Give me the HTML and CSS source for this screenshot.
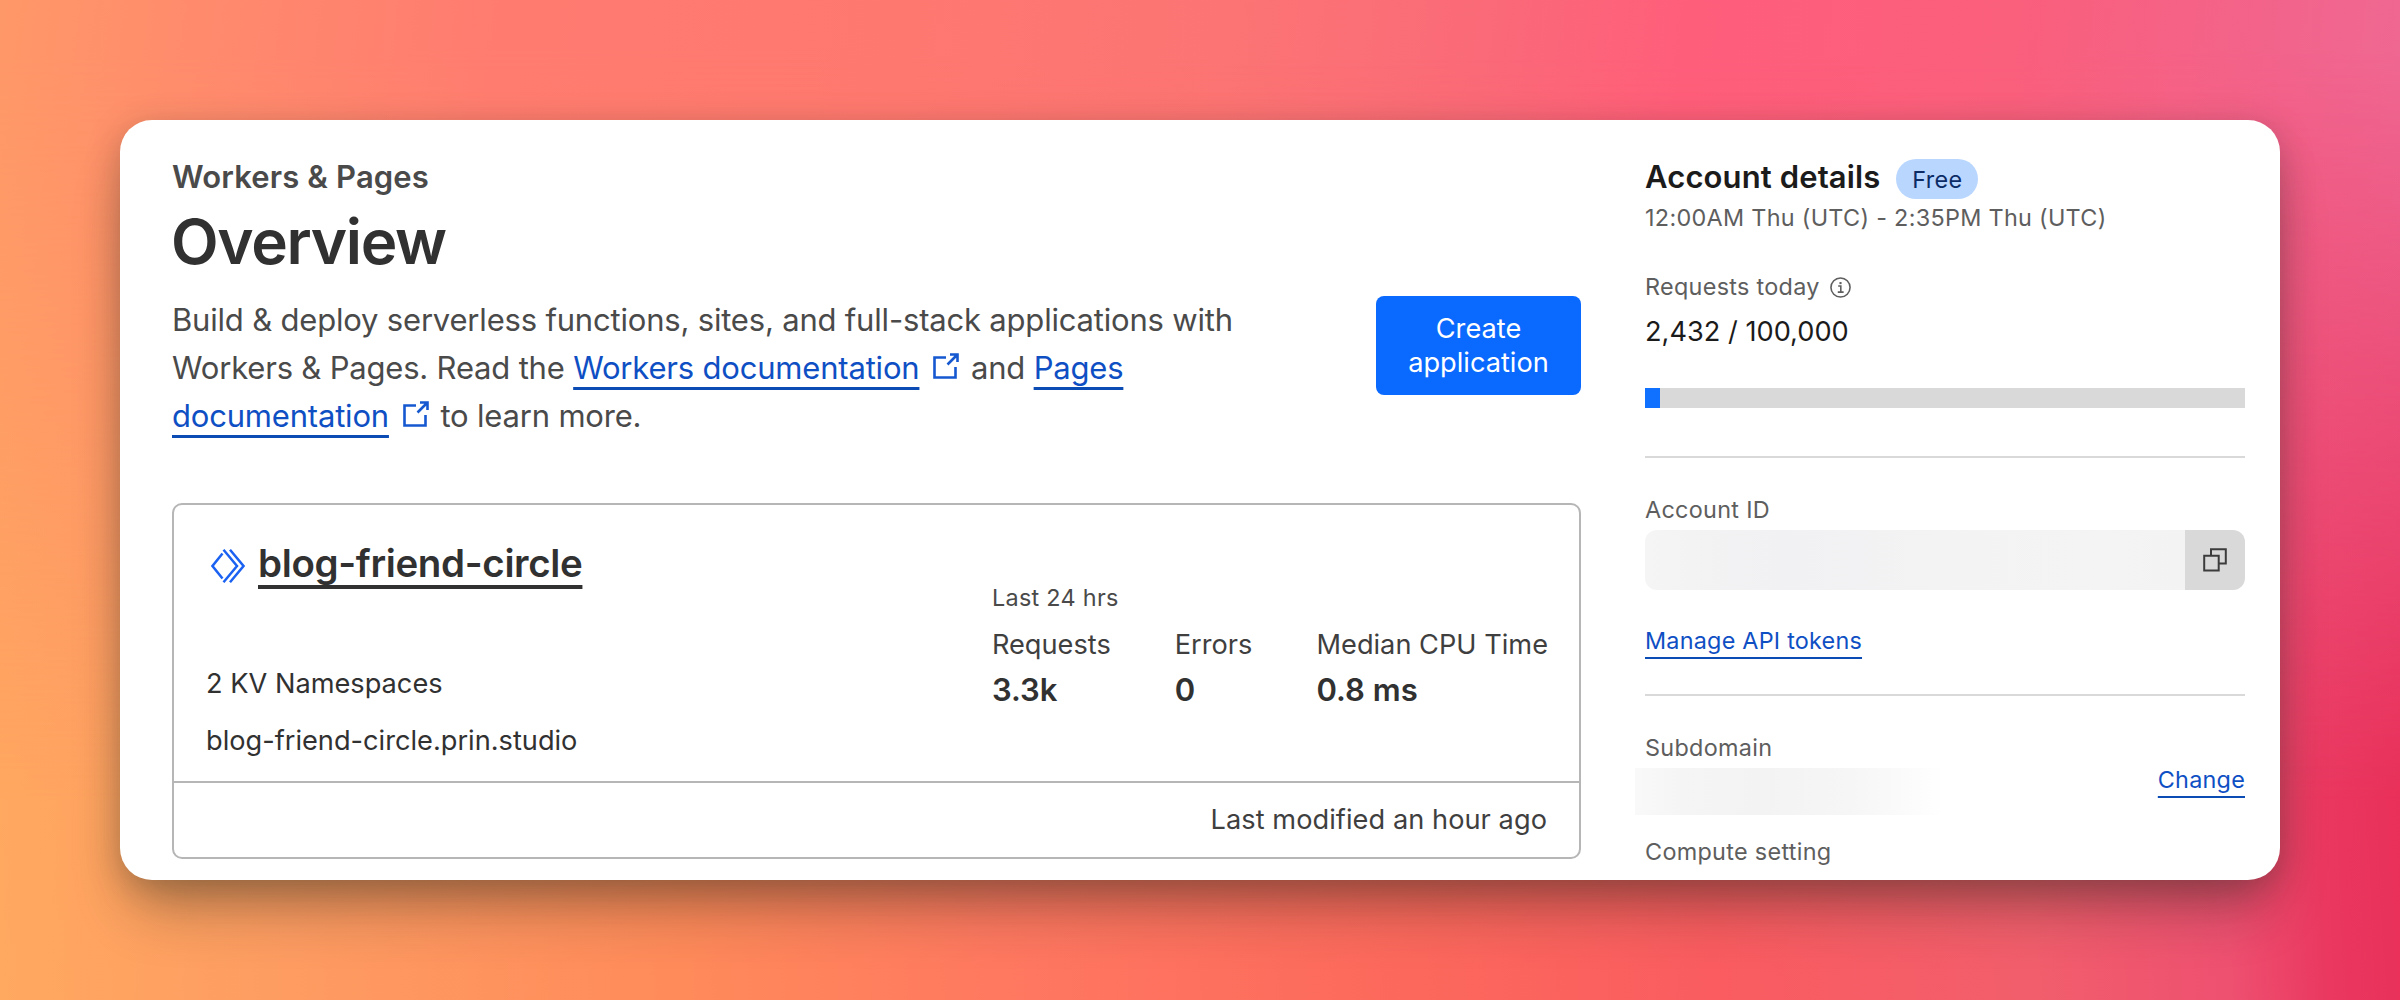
FILE: index.html
```html
<!DOCTYPE html>
<html lang="en">
<head>
<meta charset="utf-8">
<title>Workers &amp; Pages</title>
<link rel="stylesheet" href="styles.css">
</head>
<body>
<div class="panel">
  <main class="main">
    <p class="eyebrow">Workers &amp; Pages</p>
    <h1 class="heading">Overview</h1>
    <div class="intro">
      <p class="intro-text">Build &amp; deploy serverless functions, sites, and full-stack applications with Workers &amp; Pages. Read the <a class="link" href="#">Workers documentation</a><svg class="external" viewBox="0 0 26 26"><path d="M13 4.5H1.5v20h21V14M14.5 11.5L24 2M17 1.5h7.5V9"/></svg> and <a class="link" href="#">Pages documentation</a><svg class="external" viewBox="0 0 26 26"><path d="M13 4.5H1.5v20h21V14M14.5 11.5L24 2M17 1.5h7.5V9"/></svg> to learn more.</p>
      <button class="create">Create application</button>
    </div>
    <article class="app">
      <div class="app-body">
        <div class="app-info">
          <div class="app-name">
            <svg class="app-icon" viewBox="0 0 34 34"><path d="M11.5 4.5L1.5 17l10 12.5M12.5.8L26 17 12.5 33.2M19 .8L32.5 17 19 33.2"/></svg>
            <a class="app-link" href="#">blog-friend-circle</a>
          </div>
          <p class="app-bindings">2 KV Namespaces</p>
          <p class="app-domain">blog-friend-circle.prin.studio</p>
        </div>
        <div class="stats">
          <p class="stats-period">Last 24 hrs</p>
          <dl class="stats-list">
            <div><dt>Requests</dt><dd>3.3k</dd></div>
            <div><dt>Errors</dt><dd>0</dd></div>
            <div><dt>Median CPU Time</dt><dd>0.8 ms</dd></div>
          </dl>
        </div>
      </div>
      <footer class="app-footer">Last modified an hour ago</footer>
    </article>
  </main>
  <aside class="side">
    <div class="side-head">
      <h2 class="side-title">Account details</h2>
      <span class="badge">Free</span>
    </div>
    <p class="label period">12:00AM Thu (UTC) - 2:35PM Thu (UTC)</p>
    <p class="label requests">Requests today
      <svg class="info" viewBox="0 0 20 20"><circle cx="10" cy="10" r="9.1"/><path d="M7.8 8.6h2.5v5.6M7.4 14.4h5.6"/><path class="dot" d="M9 4.8h2v2H9z"/></svg>
    </p>
    <p class="usage">2,432 / 100,000</p>
    <div class="meter"><div class="meter-fill" style="width:2.5%"></div></div>
    <hr class="rule">
    <p class="label section">Account ID</p>
    <div class="field">
      <div class="field-value"></div>
      <button class="copy"><svg viewBox="0 0 24 24"><path d="M1.2 7.8h14.5v14.6H1.2zM8 7.5V1.2h14.8v14.4h-6.3"/></svg></button>
    </div>
    <a class="link small-link tokens" href="#">Manage API tokens</a>
    <hr class="rule tight">
    <p class="label section">Subdomain</p>
    <div class="subdomain">
      <div class="redacted"></div>
      <a class="link small-link" href="#">Change</a>
    </div>
    <p class="label compute">Compute setting</p>
  </aside>
</div>
</body>
</html>
```
FILE: styles.css
```css
* { box-sizing: border-box; margin: 0; padding: 0; }

body {
  width: 2400px;
  height: 1000px;
  padding: 120px;
  overflow: hidden;
  position: relative;
  isolation: isolate;
  font-family: Inter, "Liberation Sans", sans-serif;
  color: #313131;
  background: linear-gradient(87deg, #ffa860 0, #fe9c62 12%, #ff8a5a 28%, #ff7860 41%, #fc685c 58%, #fa5c60 70%, #f25e6c 83%, #ee5070 91%, #ea3860 95%, #e82c56 100%);
}

body::before {
  content: "";
  position: absolute;
  inset: 0;
  z-index: -1;
  background: linear-gradient(97deg, #ff9868 0, #ff8c6c 7%, #ff7b70 20%, #ff7870 36%, #fc7474 49%, #fa6a78 59%, #ff5e7b 67%, #fa5f7c 80%, #f2648c 91%, #ec6c98 100%);
  -webkit-mask-image: linear-gradient(#000 5%, transparent 80%);
  mask-image: linear-gradient(#000 5%, transparent 80%);
}

.panel {
  display: flex;
  gap: 64px;
  width: 2160px;
  height: 760px;
  padding: 37px 35px 0 52px;
  border-radius: 32px;
  background: #fff;
  box-shadow: 0 40px 60px -14px rgba(20, 30, 20, .32), 0 8px 34px rgba(30, 40, 30, .26);
}

.main { width: 1409px; }

.eyebrow {
  font-size: 31px;
  line-height: 40px;
  font-weight: 600;
  letter-spacing: .15px;
  color: #4a4a4a;
}

.heading {
  margin: 4px 0 16px -1px;
  font-size: 62px;
  line-height: 81px;
  height: 80px;
  font-weight: 600;
  letter-spacing: -1.35px;
}

.intro {
  display: flex;
  justify-content: space-between;
  align-items: flex-start;
}

.intro-text {
  width: 1090px;
  margin-top: -1px;
  font-size: 31px;
  line-height: 48px;
  letter-spacing: -.19px;
  color: #4a4a4a;
}

.link {
  color: #0f4fc4;
  text-decoration: underline 3px #0b4cb4;
  text-underline-offset: 8px;
  text-decoration-skip-ink: none;
}

.external {
  width: 26px;
  height: 26px;
  margin: 0 3px 0 14px;
  fill: none;
  stroke: #1558d0;
  stroke-width: 2.6;
}

.create {
  width: 205px;
  height: 99px;
  margin-top: -1px;
  padding: 0 28px;
  border: 0;
  border-radius: 8px;
  background: #0a69ff;
  color: #fff;
  font: 400 27.2px/34px Inter, sans-serif;
}

.app {
  margin-top: 63px;
  height: 356px;
  border: 2px solid #b6b6b6;
  border-radius: 10px;
}

.app-body {
  display: flex;
  justify-content: space-between;
  height: 276px;
  padding: 34px 31px 0 32px;
}

.app-name { display: flex; align-items: center; height: 48px; }

.app-icon {
  width: 34px;
  height: 34px;
  margin: 6px 13px 0 5px;
  fill: none;
  stroke: #1c62f2;
  stroke-width: 2.5;
}

.app-link {
  color: #313131;
  font-size: 38.5px;
  line-height: 48px;
  font-weight: 600;
  letter-spacing: -.35px;
  text-decoration: underline 4px;
  text-underline-offset: 8px;
  text-decoration-skip-ink: none;
}

.app-bindings, .app-domain {
  font-size: 27.2px;
  line-height: 40px;
}
.app-bindings { margin: 77px 0 17px; }

.stats { padding-top: 41px; }
.stats-period { font-size: 23.4px; line-height: 36px; letter-spacing: .3px; color: #4a4a4a; }
.stats-list { display: flex; gap: 64px; margin-top: 9px; }
.stats-list dt { font-size: 27.2px; line-height: 40px; color: #3f3f3f; }
.stats-list dd { margin-top: 5px; font-size: 31px; line-height: 40px; font-weight: 600; }

.app-footer {
  height: 76px;
  padding: 0 32px;
  border-top: 2px solid #b6b6b6;
  font-size: 27.2px;
  line-height: 74px;
  letter-spacing: .05px;
  text-align: right;
  color: #3f3f3f;
}

.side { width: 600px; }

.side-head { display: flex; gap: 16px; height: 40px; }

.side-title {
  font-size: 31px;
  line-height: 40px;
  font-weight: 600;
  letter-spacing: .12px;
  color: #1b1b1b;
}

.badge {
  width: 82px;
  height: 40px;
  margin-top: 2px;
  border-radius: 20px;
  background: #b9d6ff;
  color: #0c2c66;
  font-size: 23.4px;
  line-height: 41px;
  letter-spacing: .4px;
  text-align: center;
}

.label {
  height: 36px;
  font-size: 23.4px;
  line-height: 36px;
  letter-spacing: .3px;
  color: #5e5e5e;
}

.period { margin-top: 3px; }
.requests { display: flex; align-items: center; gap: 10px; margin-top: 33px; }

.info {
  width: 21px;
  height: 21px;
  fill: none;
  stroke: #5e5e5e;
  stroke-width: 1.5;
}
.info .dot { fill: #5e5e5e; stroke: none; }

.usage {
  margin-top: 7px;
  font-size: 27.2px;
  line-height: 40px;
  color: #1b1b1b;
}

.meter { height: 20px; margin-top: 36px; background: #d9d9d9; }
.meter-fill { height: 100%; background: #1070ff; }

.rule { height: 2px; margin-top: 48px; border: 0; background: #d9d9d9; }
.rule.tight { margin-top: 34px; }

.section { margin-top: 34px; }

.field {
  display: flex;
  height: 60px;
  margin-top: 2px;
  border-radius: 12px;
  overflow: hidden;
}

.field-value {
  flex: 1;
  background: linear-gradient(90deg, #f5f5f6 0, #f3f3f4 8%, #f1f1f3 25%, #f3f3f4 55%, #f4f4f5 85%, #f3f3f4 100%);
}

.copy {
  display: flex;
  align-items: center;
  justify-content: center;
  width: 60px;
  border: 0;
  background: #d9d9d9;
}
.copy svg { width: 24px; height: 24px; fill: none; stroke: #3c3c3c; stroke-width: 2; }

.small-link {
  font-size: 23.4px;
  line-height: 36px;
  letter-spacing: .22px;
  text-decoration-thickness: 2px;
}
.tokens { display: block; width: max-content; margin-top: 33px; }
.tokens + .rule { margin-top: 35px; }

.subdomain {
  display: flex;
  justify-content: space-between;
  align-items: flex-start;
  height: 47px;
  margin-top: 2px;
}
.subdomain .small-link { margin-top: -6px; }

.redacted {
  width: 309px;
  height: 47px;
  margin-left: -10px;
  background: linear-gradient(90deg, #f9f9f9 0, #f5f5f5 15%, #f3f3f3 40%, #f6f6f6 70%, #fbfbfb 88%, #fff 100%);
}

.compute { margin-top: 19px; }
```
